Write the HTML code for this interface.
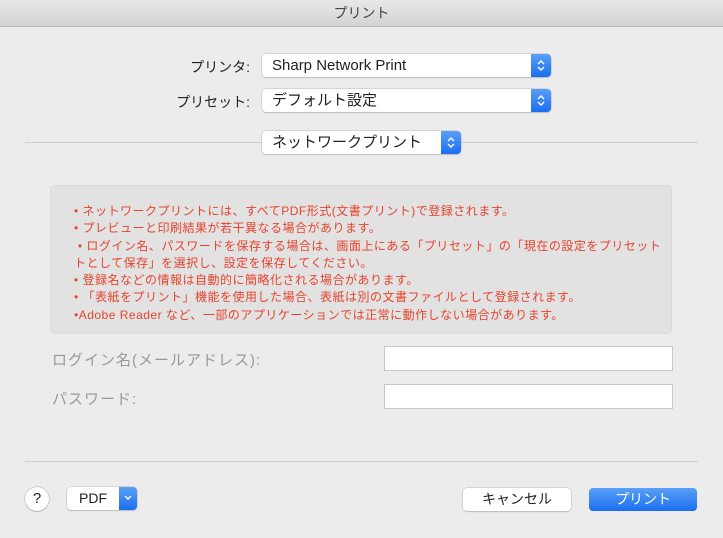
<!DOCTYPE html>
<html><head><meta charset="utf-8"><style>
*{margin:0;padding:0;box-sizing:border-box}
body{width:723px;height:538px;background:#ececec;font-family:"Liberation Sans","Noto Sans CJK JP",sans-serif;position:relative;overflow:hidden;color:#222}
.abs{position:absolute}
.title{left:0;top:0;width:723px;height:27px;background:linear-gradient(#e8e8e8,#d3d3d3);border-bottom:1px solid #b8b8b8;text-align:center;font-size:14px;line-height:27px;color:#444}
.lbl{font-size:14px;text-align:right;width:150px;left:100px}
.pop{background:#fff;border-radius:4px;box-shadow:0 0 0 0.5px #bbb,0 1px 1px rgba(0,0,0,.2);font-size:15px;padding-left:10px;line-height:23px;height:23px}
.arr{position:absolute;right:0;top:0;width:20px;height:23px;background:linear-gradient(#5aa0f7,#1a6ef0);border-radius:0 4px 4px 0}
.arr svg{position:absolute;left:5px;top:5px}
.line{height:1px;background:#cfcfcf}
.box{left:50px;top:185px;width:622px;height:149px;background:#e2e2e2;border-radius:5px;border:1px solid #dadada}
.red{left:74px;top:203px;font-size:12px;line-height:17.3px;color:#e8432c;white-space:nowrap;letter-spacing:0.5px}
.in{background:#fff;border:1px solid #c8c8c8;height:25px}
.btn{background:#fff;border-radius:4px;box-shadow:0 0 0 0.5px #bbb,0 1px 1px rgba(0,0,0,.2);font-size:14px;text-align:center;height:23px;line-height:23px}
.gl{font-size:15px;color:#999;letter-spacing:1px}
</style></head><body>
<div class="abs title">プリント</div>
<div class="abs lbl" style="top:57px">プリンタ:</div>
<div class="abs pop" style="left:262px;top:54px;width:289px">Sharp Network Print<div class="arr"><svg width="10" height="13" viewBox="0 0 10 13"><path d="M2 5 L5 2 L8 5 M2 8 L5 11 L8 8" stroke="#fff" stroke-width="1.4" fill="none"/></svg></div></div>
<div class="abs lbl" style="top:92px">プリセット:</div>
<div class="abs pop" style="left:262px;top:89px;width:289px">デフォルト設定<div class="arr"><svg width="10" height="13" viewBox="0 0 10 13"><path d="M2 5 L5 2 L8 5 M2 8 L5 11 L8 8" stroke="#fff" stroke-width="1.4" fill="none"/></svg></div></div>
<div class="abs line" style="left:25px;top:142px;width:673px"></div>
<div class="abs pop" style="left:262px;top:131px;width:199px">ネットワークプリント<div class="arr"><svg width="10" height="13" viewBox="0 0 10 13"><path d="M2 5 L5 2 L8 5 M2 8 L5 11 L8 8" stroke="#fff" stroke-width="1.4" fill="none"/></svg></div></div>
<div class="abs box"></div>
<div class="abs red">• ネットワークプリントには、すべてPDF形式(文書プリント)で登録されます。<br>• プレビューと印刷結果が若干異なる場合があります。<br>&nbsp;• ログイン名、パスワードを保存する場合は、画面上にある「プリセット」の「現在の設定をプリセット<br>トとして保存」を選択し、設定を保存してください。<br>• 登録名などの情報は自動的に簡略化される場合があります。<br>• 「表紙をプリント」機能を使用した場合、表紙は別の文書ファイルとして登録されます。<br>•Adobe Reader など、一部のアプリケーションでは正常に動作しない場合があります。</div>
<div class="abs gl" style="left:52px;top:349px">ログイン名(メールアドレス):</div>
<div class="abs in" style="left:384px;top:346px;width:289px"></div>
<div class="abs gl" style="left:52px;top:388px">パスワード:</div>
<div class="abs in" style="left:384px;top:384px;width:289px"></div>
<div class="abs line" style="left:25px;top:461px;width:673px"></div>
<div class="abs" style="left:25px;top:487px;width:24px;height:24px;border-radius:50%;background:#fff;box-shadow:0 0 0 0.5px #aaa,0 1px 1px rgba(0,0,0,.2);text-align:center;line-height:24px;font-size:15px">?</div>
<div class="abs btn" style="left:67px;top:487px;width:70px;text-align:left;padding-left:12px">PDF<div class="arr" style="width:18px"><svg width="10" height="13" viewBox="0 0 10 13" style="left:4px;top:5px"><path d="M2 4 L5 7 L8 4" stroke="#fff" stroke-width="1.4" fill="none"/></svg></div></div>
<div class="abs btn" style="left:463px;top:488px;width:108px">キャンセル</div>
<div class="abs btn" style="left:589px;top:488px;width:108px;background:linear-gradient(#5aa0f7,#1a6ef0);color:#fff;box-shadow:none">プリント</div>
</body></html>
